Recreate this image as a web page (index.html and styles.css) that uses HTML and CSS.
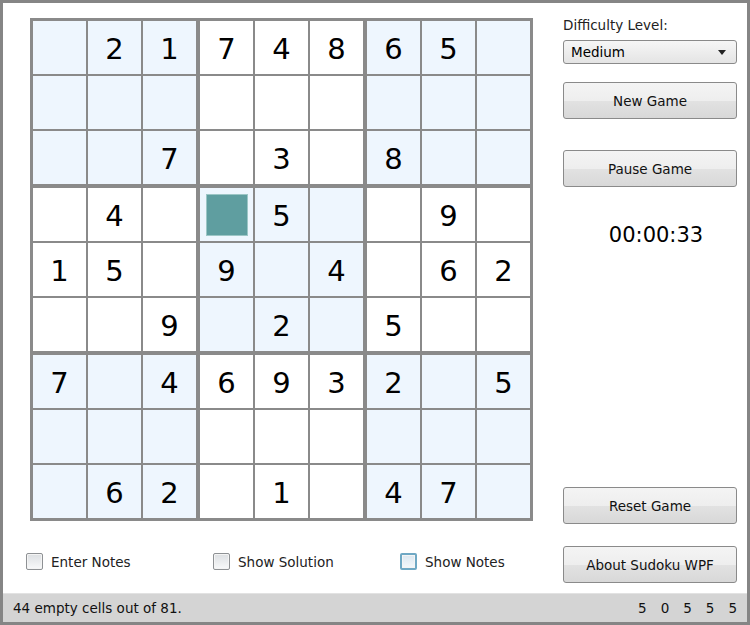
FILE: index.html
```
<!DOCTYPE html>
<html lang="en">
<head>
  <meta charset="UTF-8">
  <title>Sudoku WPF</title>
  <link rel="stylesheet" href="styles.css">
</head>
<body>

<div class="window">
  <div class="main">
    <div class="left">
      <div class="board" id="board"></div>
      <div class="options">
        <label class="check"><span class="box"></span>Enter Notes</label>
        <label class="check"><span class="box"></span>Show Solution</label>
        <label class="check"><span class="box hover"></span>Show Notes</label>
      </div>
    </div>
    <div class="side">
      <div class="label">Difficulty Level:</div>
      <div class="select">Medium<span class="arrow"></span></div>
      <button class="btn new">New Game</button>
      <button class="btn pause">Pause Game</button>
      <div class="timer">00:00:33</div>
      <div class="spacer"></div>
      <button class="btn">Reset Game</button>
      <button class="btn about">About Sudoku WPF</button>
    </div>
  </div>
  <div class="status">
    <span>44 empty cells out of 81.</span>
    <span class="counts"><span>5</span><span>0</span><span>5</span><span>5</span><span>5</span></span>
  </div>
</div>

<script>
  // rows of the puzzle, '.' = empty, '*' = selected cell
  const rows = [
    '.21748 65.',
    '.........',
    '..7.3.8..',
    '.4.*5..9.',
    '15.9.4.62',
    '..9.2.5..',
    '7.4693 2.5',
    '.........',
    '.62.1.47.'
  ].map(r => r.replace(/ /g, ''));

  const board = document.getElementById('board');
  for (let b = 0; b < 9; b++) {
    const block = document.createElement('div');
    block.className = 'block' + (b % 2 === 0 ? ' shaded' : '');
    const br = Math.floor(b / 3), bc = b % 3;
    for (let i = 0; i < 9; i++) {
      const r = br * 3 + Math.floor(i / 3);
      const c = bc * 3 + i % 3;
      const ch = rows[r][c];
      const cell = document.createElement('div');
      cell.className = 'cell';
      if (ch === '*') {
        const sel = document.createElement('span');
        sel.className = 'selected';
        cell.appendChild(sel);
      } else if (ch !== '.') {
        cell.textContent = ch;
      }
      block.appendChild(cell);
    }
    board.appendChild(block);
  }
</script>

</body>
</html>
```

FILE: styles.css
```
* { box-sizing: border-box; }
body { margin: 0; font-family: "DejaVu Sans", Verdana, sans-serif; font-size: 13px; color: #000; }

.window {
  width: 750px;
  height: 625px;
  border: 3px solid #858585;
  background: #fff;
  display: flex;
  flex-direction: column;
}
.main { flex: 1; display: flex; }

.left { padding: 15px 0 0 27px; width: 560px; }
.board {
  width: 503px;
  height: 503px;
  border: 1px solid #8a8a8a;
  display: grid;
  grid-template-columns: repeat(3, 167px);
  grid-template-rows: repeat(3, 167px);
}
.block {
  border: 1px solid #8a8a8a;
  display: grid;
  grid-template-columns: repeat(3, 55px);
  grid-template-rows: repeat(3, 55px);
  background: #fff;
}
.block.shaded { background: #eef6fe; }
.cell {
  border: 1px solid #8a8a8a;
  display: flex;
  align-items: center;
  justify-content: center;
  font-size: 29px;
  padding-top: 2px;
}
.selected {
  width: 42px;
  height: 42px;
  margin-top: -2px;
  background: #5f9ea0;
  border: 1px solid #9cc6c6;
}

.options {
  display: grid;
  grid-template-columns: repeat(3, 187px);
  margin: 32px 0 0 -4px;
}
.check { display: flex; align-items: center; gap: 8px; font-size: 13.5px; color: #222; padding-top: 1px; }
.box {
  width: 17px;
  height: 17px;
  margin-top: -1px;
  border: 1px solid #8e9194;
  border-radius: 2px;
  background: linear-gradient(#dcdfe2, #f8f9fa);
  box-shadow: inset 0 0 0 1px #f4f4f4;
}
.box.hover {
  border: 2px solid #6fa8c4;
  background: linear-gradient(#dbe7f0, #f4f8fb);
}

.side {
  width: 174px;
  padding: 13px 0 10px;
  display: flex;
  flex-direction: column;
}
.label { line-height: 18px; font-size: 13.5px; color: #222; }
.select {
  margin-top: 6px;
  height: 24px;
  border: 1px solid #8a8a8a;
  border-radius: 3px;
  background: linear-gradient(#f6f6f6, #e4e4e4);
  padding: 3px 7px;
  font-size: 13.5px;
  position: relative;
}
.arrow {
  position: absolute;
  right: 10px;
  top: 9px;
  border-left: 4px solid transparent;
  border-right: 4px solid transparent;
  border-top: 5px solid #222;
}
.btn {
  height: 37px;
  border: 1px solid #8a8a8a;
  border-radius: 3px;
  background: linear-gradient(#f4f4f4 0%, #eeeeee 50%, #e2e2e2 51%, #d8d8d8 100%);
  font-family: inherit;
  font-size: 13.5px;
  color: #111;
  padding: 0;
}
.btn.new { margin-top: 18px; }
.btn.pause { margin-top: 31px; }
.btn.about { margin-top: 22px; }
.timer { margin-top: 36px; padding-left: 12px; line-height: 24px; font-size: 21px; text-align: center; }
.spacer { flex: 1; }

.status {
  height: 29px;
  background: #d4d4d4;
  border-top: 1px solid #e2e2e2;
  display: flex;
  align-items: center;
  justify-content: space-between;
  padding: 0 10px;
  font-size: 13.5px;
  color: #111;
}
.counts { display: flex; gap: 14px; }
```
